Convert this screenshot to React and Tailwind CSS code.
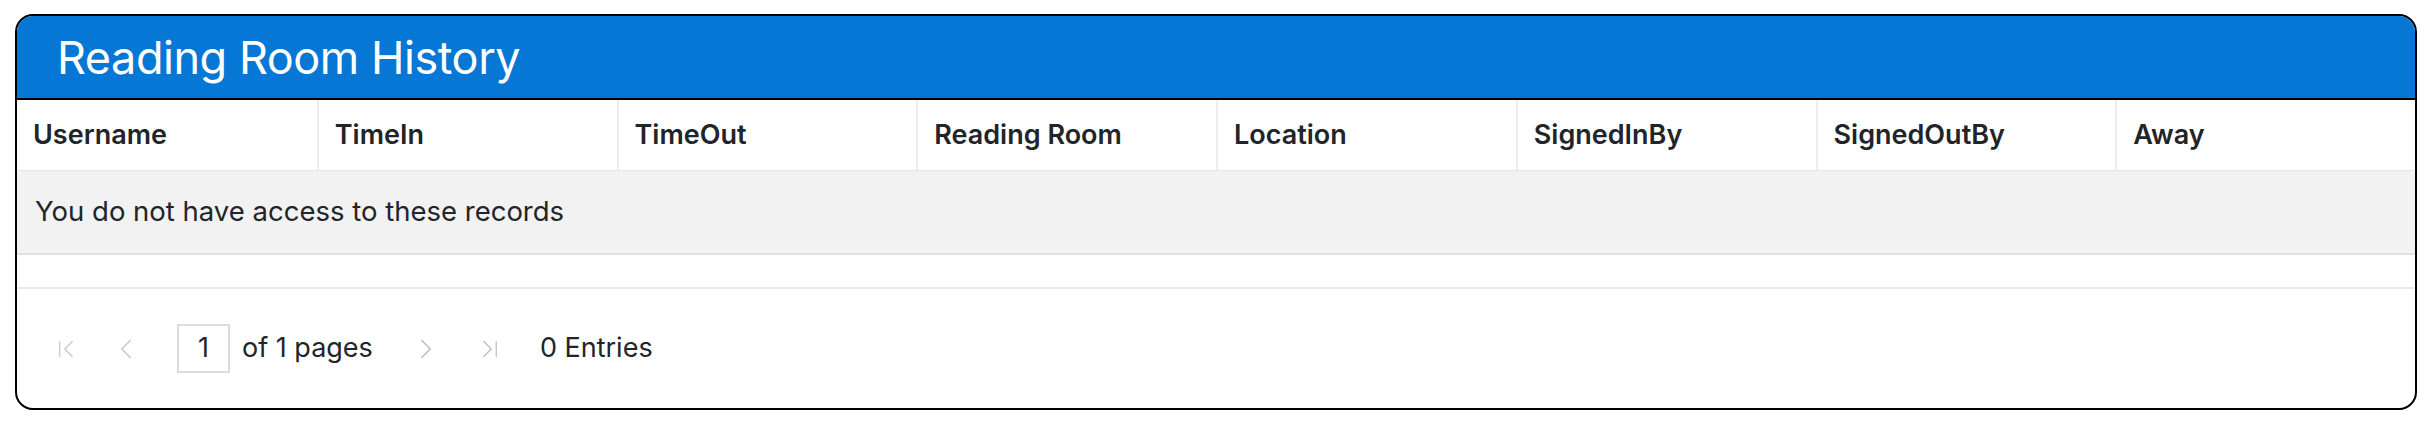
import React from 'react';
import { ChevronFirst, ChevronLeft, ChevronRight, ChevronLast } from 'lucide-react';

const columns = ['Username', 'TimeIn', 'TimeOut', 'Reading Room', 'Location', 'SignedInBy', 'SignedOutBy', 'Away'];

const App = () => {
    return (
        <div className="w-full h-[422px] bg-white pt-[14px] px-[15px] font-['Inter',_sans-serif] text-[#212529]">
            <div className="border-2 border-black rounded-[18px] overflow-hidden">
                {/* Title bar */}
                <div className="h-[84px] bg-[#0677d4] border-b-2 border-black flex items-center pl-[40px]">
                    <h1 className="text-[45px] text-white font-normal leading-none tracking-[-0.01em]">Reading Room History</h1>
                </div>

                {/* Header row */}
                <div className="grid grid-cols-8 h-[71px] border-b border-[#e6e6e6]">
                    {columns.map((col, i) => (
                        <div key={col} className={`flex items-center pl-[16px] text-[27px] font-semibold ${i > 0 ? 'border-l-2 border-[#ececec]' : ''}`}>
                            {col}
                        </div>
                    ))}
                </div>

                {/* Message row */}
                <div className="h-[84px] bg-[#f2f2f2] border-b-2 border-[#dee2e6] flex items-center pl-[18px] text-[27.5px]">
                    You do not have access to these records
                </div>

                {/* Empty row */}
                <div className="h-[34px] border-b-2 border-[#ebebeb]"></div>

                {/* Pagination */}
                <div className="h-[119px] flex items-center pl-[34px] text-[27px]">
                    <ChevronFirst size={30} strokeWidth={1} className="text-[#c8c8c8]" />
                    <ChevronLeft size={34} strokeWidth={1} className="text-[#c8c8c8] ml-[28px]" />
                    <div className="ml-[34px] w-[53px] h-[49px] border-2 border-[#dcdcdc] flex items-center justify-center">1</div>
                    <span className="ml-[12px]">of 1 pages</span>
                    <ChevronRight size={34} strokeWidth={1} className="text-[#bdbdbd] ml-[36px]" />
                    <ChevronLast size={30} strokeWidth={1} className="text-[#bdbdbd] ml-[32px]" />
                    <span className="ml-[35px]">0 Entries</span>
                </div>
            </div>
        </div>
    );
};

export default App;
